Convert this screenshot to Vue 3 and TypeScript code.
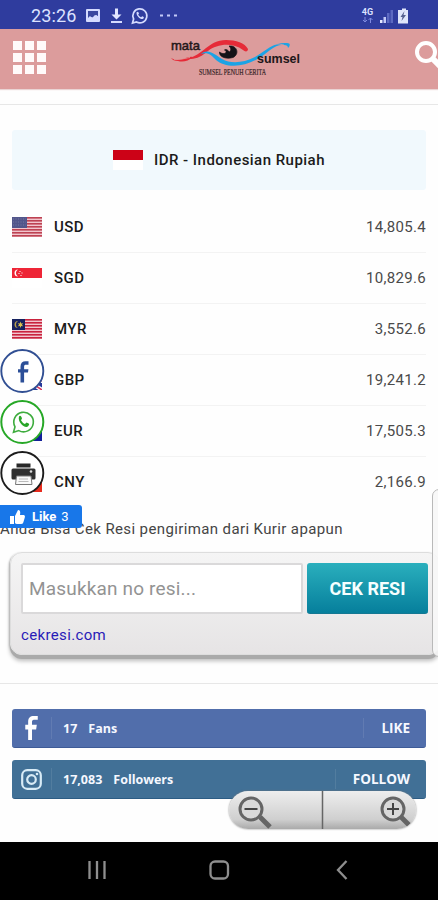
<script setup lang="ts">
interface Rate {
  code: string
  value: string
}

const rates: Rate[] = [
  { code: 'USD', value: '14,805.4' },
  { code: 'SGD', value: '10,829.6' },
  { code: 'MYR', value: '3,552.6' },
  { code: 'GBP', value: '19,241.2' },
  { code: 'EUR', value: '17,505.3' },
  { code: 'CNY', value: '2,166.9' },
]

const stripes = [0, 1, 2, 3, 4, 5, 6]
const tiles = [1, 2, 3, 4, 5, 6, 7, 8, 9]
</script>

<template>
  <div class="screen">
    <div class="status">
      <span class="clock">23:26</span>
      <svg class="status-left" width="94" height="20" viewBox="0 0 94 20">
        <rect x="1" y="3" width="14" height="13" rx="1" fill="#d5dbff" />
        <path d="M3 5h10v5l-3-1-3 3-2-2-2 2z" fill="#3b489f" />
        <path d="M2.500 14l4-3 2 1 3-3 2.500 4v1z" fill="#d5dbff" />
        <path d="M30 2.500h3v6h3.500l-5 5-5-5H30z" fill="#e2e6ff" />
        <rect x="26" y="15" width="11" height="2" fill="#d5dbff" />
        <path d="M47.500 17l1.100-4A7 7 0 1 1 51.500 16z" fill="none" stroke="#d5dbff" stroke-width="1.700" />
        <path d="M51.500 6.500c1-1.500 2-.5 2.500 1l-.8 1.300q1 1.700 2.800 2.500l1.200-1c2 .7 2.200 1.500 1 2.500-2 1.500-7-2.500-6.700-6.300z" fill="#d5dbff" />
        <g fill="#c3caf8">
          <rect x="75" y="8.500" width="3" height="2" /><rect x="82" y="8.500" width="3" height="2" /><rect x="89" y="8.500" width="3" height="2" />
        </g>
      </svg>
      <span class="network"><b>4G</b><svg width="12" height="6" viewBox="0 0 12 6"><path d="M3 0v5M1 3l2 2 2-2M8.500 6V1M6.500 3l2-2 2 2" fill="none" stroke="#7f8ae0" stroke-width="1" /></svg></span>
      <svg class="signal" width="32" height="18" viewBox="0 0 32 18">
        <rect x="1" y="13" width="2.500" height="3" fill="#e4e8ff" /><rect x="4.500" y="10" width="2.500" height="6" fill="#c3caf8" />
        <rect x="8" y="6" width="2.500" height="10" fill="#5c69c1" /><rect x="11.500" y="3" width="2.500" height="13" fill="#5c69c1" />
        <path d="M21 3h2V1.500h4V3h2v13.500H19V3z" fill="#dfe5fa" />
        <path d="M25.500 4l-4 6h2l-1 4 4.500-6h-2.500z" fill="#56618f" />
      </svg>
    </div>

    <header class="header">
      <div class="tiles"><i v-for="t in tiles" :key="t"></i></div>
      <svg class="logo" width="136" height="44" viewBox="0 0 136 44">
        <text x="2" y="13.500" textLength="29" lengthAdjust="spacingAndGlyphs" font-family="Liberation Sans" font-size="13" stroke="#241719" stroke-width=".5" fill="#241719">mata</text>
        <path d="M2 22q4 3 12 1 7-3 10-2-7 6-15 4Q4 25 2 22z" fill="#e62b38" />
        <path d="M5 23.500q8 0 16-2" fill="none" stroke="#dc9c9c" stroke-width=".8" />
        <path d="M18 22.500C34 20 39 4 57 4c10 0 19 3 22 9 0 3-3 3-5 1-11-8-26-6-35 1-7 6-13 9-21 7.500z" fill="#e62b38" />
        <path d="M32 18c7-6 13 0 21 5 9 5 21 4 33-2 12-7 18-15 32-14 4 0 3 3 1 5q0-3-4-3c-10-1-15 7-25 13-15 10-34 10-43 2-5-5-8-8-15-6z" fill="#1ca3e5" />
        <path d="M98 11q7-5 17-2" stroke="#dc9c9c" fill="none" stroke-width=".8" />
        <path d="M60 10c8-1 11 8 4 11.500-7 2-14-.5-13.500-5.500 5 4 9-.5 5-2 2-1.500 4 1 5 2 2-2 1.500-4-.5-6z" fill="#151318" stroke="#151318" stroke-width=".7" />
        <text x="88" y="26.500" textLength="43" lengthAdjust="spacingAndGlyphs" font-family="Liberation Sans" font-weight="bold" font-size="12.500" fill="#201719">sumsel</text>
        <text x="30" y="38.500" textLength="67" lengthAdjust="spacingAndGlyphs" font-family="Liberation Serif" font-size="8.500" fill="#342225" stroke="#342225" stroke-width=".2">SUMSEL PENUH CERITA</text>
      </svg>
      <svg class="search" width="24" height="32" viewBox="0 0 24 32">
        <circle cx="12" cy="12" r="9" fill="none" stroke="#fff" stroke-width="4" />
        <path d="M18 18l9 9" stroke="#fff" stroke-width="6" />
      </svg>
    </header>

    <main class="content">
      <div class="rule first"></div>
      <section class="currency">
        <div class="base">
          <svg width="30" height="20" viewBox="0 0 30 20"><rect width="30" height="20" fill="#fff" /><rect width="30" height="10" fill="#cc0217" /></svg>
          <span>IDR - Indonesian Rupiah</span>
        </div>
        <div v-for="rate in rates" :key="rate.code" class="rate">
          <svg class="flag" width="30" height="20" viewBox="0 0 30 20">
            <template v-if="rate.code === 'USD' || rate.code === 'MYR'">
              <rect width="30" height="20" fill="#f1c5cd" />
              <rect v-for="s in stripes" :key="s" :y="s * 3" width="30" height="1.600" :fill="rate.code === 'USD' ? '#bd4252' : '#c9233e'" />
              <rect :width="rate.code === 'USD' ? 15 : 13" height="11" :fill="rate.code === 'USD' ? '#52568b' : '#17225f'" />
              <path v-if="rate.code === 'USD'" d="M1 2h13M1 5h13M1 8h13" stroke="#8588ad" stroke-dasharray="1 1.500" stroke-width=".7" />
              <g v-else>
                <path d="M6 2a3.500 3.500 0 1 0 0 7 4 4 0 0 1 0-7" fill="#b6a04d" />
                <path d="M8.500 2.500l.7 2 2-.3-1.300 1.500 1.300 1.500-2-.3-.7 2-.7-2-2 .3 1.300-1.500-1.300-1.500 2 .3z" fill="#dbc24d" />
              </g>
            </template>
            <template v-else-if="rate.code === 'SGD'">
              <rect width="30" height="20" fill="#fff" /><rect width="30" height="10" fill="#ee2536" />
              <path d="M6 1.500a3.500 3.500 0 1 0 0 7 4 4 0 0 1 0-7" fill="#fff" />
              <path d="M7.500 3h1v1h-1zM9.500 4.500h1v1h-1zM6.500 5h1v1h-1zM8.500 7h1v1h-1z" fill="#fff" />
            </template>
            <template v-else-if="rate.code === 'GBP'">
              <rect width="30" height="20" fill="#27379a" />
              <path d="M0 0l30 20M30 0L0 20" stroke="#fff" stroke-width="4" /><path d="M0 0l30 20M30 0L0 20" stroke="#d7365d" stroke-width="1.500" />
              <path d="M15 0v20M0 10h30" stroke="#fff" stroke-width="6" /><path d="M15 0v20M0 10h30" stroke="#d7365d" stroke-width="3" />
            </template>
            <rect v-else width="30" height="20" :fill="rate.code === 'EUR' ? '#12209a' : '#e72b1d'" />
          </svg>
          <span class="code">{{ rate.code }}</span>
          <span class="value">{{ rate.value }}</span>
        </div>
      </section>

      <p class="notice">Anda Bisa Cek Resi pengiriman dari Kurir apapun</p>
      <section class="tracking">
        <div class="form">
          <div class="field">Masukkan no resi...</div>
          <div class="submit">CEK RESI</div>
        </div>
        <span class="link">cekresi.com</span>
      </section>
      <div class="rule second"></div>

      <section class="social">
        <div class="bar facebook">
          <div class="brand">
            <svg width="14" height="25" viewBox="0 0 14 26"><path d="M3 25V14H0v-5h3V6c0-4 2-6 6-6h4v4h-3c-2 0-3 .5-3 2v3h5l-.7 5H7v11z" fill="#fff" /></svg>
          </div>
          <span class="count">17</span><span>Fans</span><span class="action">LIKE</span>
        </div>
        <div class="bar instagram">
          <div class="brand">
            <svg width="21" height="21" viewBox="0 0 21 21"><g fill="none" stroke="#d8ebf6" stroke-width="2.200"><rect x="1.200" y="1.200" width="18.600" height="18.600" rx="5" /><circle cx="10.500" cy="10.500" r="4.300" /></g><circle cx="16" cy="5" r="1.300" fill="#d8ebf6" /></svg>
          </div>
          <span class="count">17,083</span><span>Followers</span><span class="action">FOLLOW</span>
        </div>
      </section>
    </main>

    <nav class="nav">
      <svg width="438" height="58" viewBox="0 0 438 58">
        <g fill="none" stroke="#8e8e8e" stroke-width="2.300">
          <path d="M89.500 19v18M97 19v18M104.500 19v18" />
          <rect x="210.500" y="19.500" width="17.500" height="17" rx="4.500" />
          <path d="M346.500 19l-8.500 9 8.500 9" />
        </g>
      </svg>
    </nav>

    <aside class="share">
      <svg width="45" height="45" viewBox="0 0 45 45">
        <circle cx="22.300" cy="22" r="21" fill="#fff" stroke="#314f93" stroke-width="1.900" />
        <path d="M20.500 33.500V23.500H18v-3.200h2.500v-2.800c0-3.500 2-5.200 5-5.200h3v3.500H26c-1.400 0-1.900.6-1.900 1.900v2.600h4.300l-.4 3.200h-3.900v10z" fill="#2c4f98" />
      </svg>
      <svg width="45" height="45" viewBox="0 0 45 45">
        <circle cx="22.300" cy="22" r="21" fill="#fff" stroke="#27a827" stroke-width="2" />
        <path d="M13.500 32.300l1.500-5.500a9.800 9.800 0 1 1 3.800 3.800z" fill="none" stroke="#3eac3e" stroke-width="1.600" />
        <path d="M19 16.500c1.200-1.500 2.300-.4 3 2l-1 1.700q1.400 2.700 3.900 3.800l1.700-1.400c3 1 3.200 2 1.500 3.700-3 2.700-10.800-4-9.100-9.800z" fill="#29a529" />
      </svg>
      <svg width="45" height="45" viewBox="0 0 45 45">
        <circle cx="22.300" cy="22" r="21" fill="#fff" stroke="#1c1c1c" stroke-width="1.900" />
        <rect x="16.500" y="12.500" width="14" height="4" fill="#282828" />
        <path d="M13 17.500h21q1.500 0 1.500 1.500v8q0 1.500-1.500 1.500H13q-1.500 0-1.500-1.500v-8q0-1.500 1.500-1.500z" fill="#303030" />
        <path d="M16.500 25h14.500l1 8.500H15.500z" fill="#fafafa" stroke="#777" stroke-width="1" />
        <path d="M19 28h9M18.500 30.500h10" stroke="#aaa" stroke-width=".8" /><circle cx="31" cy="20.500" r="1.300" fill="#ddd" />
      </svg>
      <div class="like">
        <svg width="17" height="16" viewBox="0 0 17 16"><path d="M1 7h4v8H1zM6 7l3-6q3 0 2 5h4q1.500.5.8 2.500l-1.500 5Q13.800 15 12 15H8q-1.500 0-2-1z" fill="#fff" /></svg>
        <b>Like</b><span>3</span>
      </div>
    </aside>
    <div class="edge"></div>
    <div class="zoom">
      <svg width="187" height="38" viewBox="0 0 187 38">
        <path d="M93.500 0v38" stroke="#666" stroke-width="1.500" />
        <g fill="none" stroke="#656565">
          <path d="M31 26l10 10" stroke-width="5" /><circle cx="22" cy="18" r="11" fill="#d9d9d9" stroke-width="3" /><path d="M15.500 18h13" stroke="#454545" stroke-width="2" />
          <path d="M172 26l8 8" stroke-width="5" /><circle cx="164" cy="18" r="11" fill="#d9d9d9" stroke-width="3" /><path d="M158 18h12M164 12v12" stroke="#454545" stroke-width="2" />
        </g>
      </svg>
    </div>
  </div>
</template>

<style>
body { margin: 0; background: #fff; overflow: hidden; }
</style>

<style scoped>
* { box-sizing: border-box; }
svg { display: block; flex: none; }
.screen { position: relative; display: flex; flex-direction: column; width: 438px; height: 900px; overflow: hidden; background: #fefefe; font-family: Roboto, sans-serif; color: #1b1b1b; white-space: nowrap; }
.status { display: flex; align-items: center; height: 29px; padding: 2px 27px 0 31px; background: #2f3c9e; color: #dce2ff; }
.clock { width: 46px; margin-right: 8px; font-size: 18px; line-height: 27px; letter-spacing: .15px; }
.network { display: flex; flex-direction: column; align-items: center; width: 13px; margin-left: auto; margin-right: 5px; }
.network b { font-size: 9px; line-height: 9px; }
.header { display: flex; align-items: flex-start; height: 60px; background: #dc9c9c; box-shadow: 0 1px 1px #ead4d4; }
.tiles { display: grid; grid-template-columns: repeat(3, 9px); gap: 3px; margin: 12px 0 0 13px; }
.tiles i { width: 9px; height: 9px; background: #fffafa; }
.logo { margin: 7px 0 0 123px; }
.search { margin: 11px 0 0 auto; }
.content { flex: 1; min-height: 0; }
.rule { height: 1px; background: #e7e7e7; }
.first { margin-top: 15px; }
.currency { padding: 25px 12px 0; }
.base { display: flex; justify-content: center; align-items: center; height: 60px; margin-bottom: 12px; background: #f1f9fd; border-radius: 3px; font-size: 15px; font-weight: 500; letter-spacing: .47px; }
.base svg { margin-right: 11px; }
.rate { display: flex; align-items: center; height: 51px; border-bottom: 1px solid #f3f3f3; font-size: 15px; }
.rate:last-child { border-color: transparent; }
.code { margin-left: 12px; font-weight: 500; letter-spacing: .45px; }
.value { margin-left: auto; color: #4a4a4a; letter-spacing: .3px; }
.notice { margin: 11px 0 0; font-size: 15px; line-height: 20px; color: #454545; letter-spacing: .38px; }
.tracking { width: 430px; height: 103px; margin: 13px 0 0 10px; padding: 10px 10px 0; border-radius: 12px; background: linear-gradient(#f5f5f5, #e6e4e5); border: 1px solid #ddd; box-shadow: 0 4px 0 #aaa, 0 6px 4px #bbb, -1px 1px 2px #aaa; }
.form { display: flex; gap: 4px; }
.field { width: 282px; height: 51px; border: 2px solid #dad9da; border-radius: 2px; background: #fff; padding-left: 6px; color: #939393; font-size: 19px; line-height: 47px; letter-spacing: .17px; }
.submit { width: 121px; height: 51px; border-radius: 3px; background: linear-gradient(#2aafbd, #067f9c); border-bottom: 1px solid #147892; color: #f6ffff; text-align: center; font-size: 18px; font-weight: 700; line-height: 51px; }
.link { display: block; margin-top: 10px; color: #281bb7; font-size: 15px; line-height: 22px; letter-spacing: .35px; }
.second { margin-top: 28px; }
.social { display: flex; flex-direction: column; gap: 12px; padding: 25px 12px 0; }
.bar { display: flex; align-items: center; height: 39px; padding-right: 16px; border-radius: 3px; color: #f5f8ff; font-family: "Open Sans", sans-serif; font-size: 12.5px; font-weight: 700; }
.facebook { background: #516eab; border-bottom: 1px solid #3e5b97; }
.instagram { background: #417096; border-bottom: 1px solid #2c5c84; }
.brand { display: flex; align-items: center; justify-content: center; width: 40px; height: 22px; margin-right: 11px; border-right: 1px solid #ffffff18; }
.count { margin-right: 11px; }
.action { margin-left: auto; padding-left: 17px; border-left: 1px solid #ffffff18; line-height: 20px; font-size: 13.5px; }
.nav { height: 58px; background: #000; }
.share { position: absolute; left: 0; top: 349px; display: flex; flex-direction: column; gap: 6px; }
.like { display: flex; align-items: center; width: 82px; height: 23px; margin-top: 3px; padding-left: 9px; border-radius: 0 3px 3px 0; background: #1877e9; color: #fff; font-size: 13px; }
.like b { margin: 0 5px 0 6px; }
.edge { position: absolute; left: 432px; top: 489px; width: 20px; height: 168px; border: 1px solid #b9b9b9; border-radius: 7px; background: #f7f7f7e8; }
.zoom { position: absolute; left: 229px; top: 791px; width: 187px; height: 38px; border-radius: 19px; background: linear-gradient(#eee, #cfcfcf 75%, #aaa); box-shadow: 0 0 2px #777; overflow: hidden; }
</style>
